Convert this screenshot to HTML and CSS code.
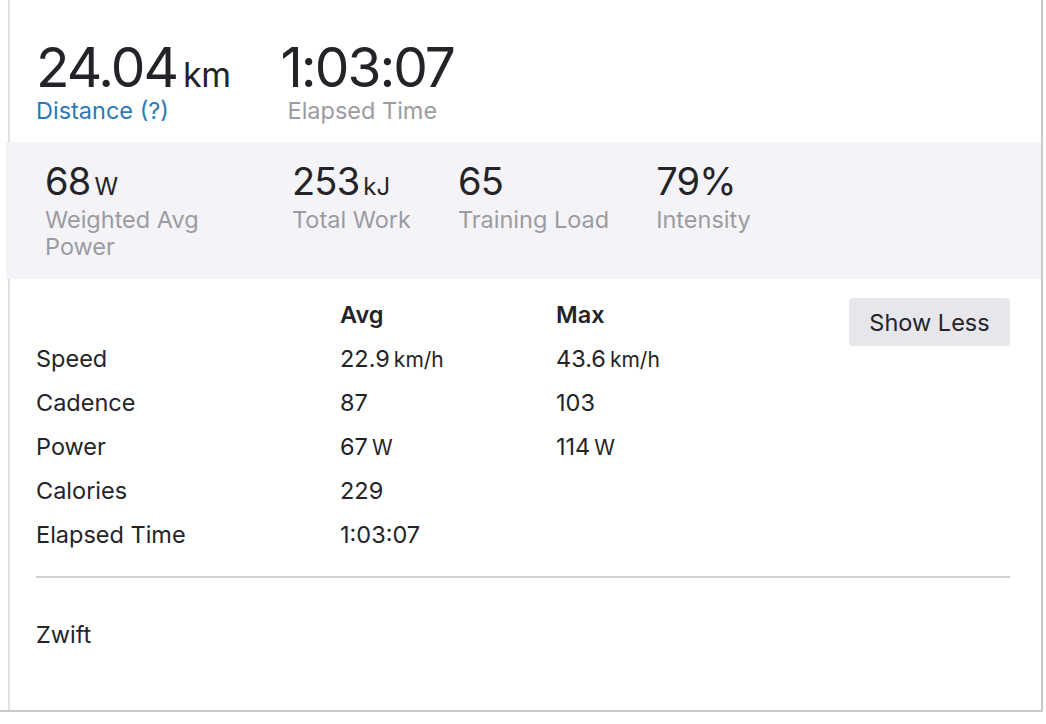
FILE: index.html
```html
<!DOCTYPE html>
<html lang="en">
<head>
<meta charset="utf-8">
<title>Activity stats</title>
<link rel="stylesheet" href="styles.css">
</head>
<body>
<div class="frame">
  <section class="card">
    <ul class="primary">
      <li class="stat">
        <div class="big-value">24.04<abbr class="big-unit">km</abbr></div>
        <div class="big-label link">Distance (?)</div>
      </li>
      <li class="stat">
        <div class="big-value">1:03:07</div>
        <div class="big-label">Elapsed Time</div>
      </li>
    </ul>

    <ul class="secondary">
      <li class="sec-stat first">
        <div class="sec-value">68<abbr class="sec-unit">W</abbr></div>
        <div class="sec-label">Weighted Avg Power</div>
      </li>
      <li class="sec-stat">
        <div class="sec-value">253<abbr class="sec-unit">kJ</abbr></div>
        <div class="sec-label">Total Work</div>
      </li>
      <li class="sec-stat">
        <div class="sec-value">65</div>
        <div class="sec-label">Training Load</div>
      </li>
      <li class="sec-stat">
        <div class="sec-value">79%</div>
        <div class="sec-label">Intensity</div>
      </li>
    </ul>

    <div class="details">
      <div class="table">
        <div class="cell"></div>
        <div class="cell head">Avg</div>
        <div class="cell head">Max</div>

        <div class="cell">Speed</div>
        <div class="cell">22.9<abbr class="unit">km/h</abbr></div>
        <div class="cell">43.6<abbr class="unit">km/h</abbr></div>

        <div class="cell">Cadence</div>
        <div class="cell">87</div>
        <div class="cell">103</div>

        <div class="cell">Power</div>
        <div class="cell">67<abbr class="unit">W</abbr></div>
        <div class="cell">114<abbr class="unit">W</abbr></div>

        <div class="cell">Calories</div>
        <div class="cell">229</div>
        <div class="cell"></div>

        <div class="cell">Elapsed Time</div>
        <div class="cell">1:03:07</div>
        <div class="cell"></div>
      </div>
      <button class="toggle" type="button">Show Less</button>
    </div>

    <div class="divider"></div>

    <div class="device">Zwift</div>
  </section>
</div>
</body>
</html>
```

FILE: styles.css
```css
html, body {
  margin: 0;
  padding: 0;
  background: #ffffff;
}

body {
  font-family: Inter, "Noto Sans", "Liberation Sans", sans-serif;
  color: #242428;
}

abbr {
  text-decoration: none;
}

ul {
  list-style: none;
  margin: 0;
  padding: 0;
}

.frame {
  width: 1041px;
  height: 710px;
  border-right: 2px solid #c9c9cd;
  border-bottom: 2px solid #c9c9cd;
}

.card {
  margin-left: 8px;
  height: 710px;
  border-left: 2px solid #e1e1e5;
  box-sizing: border-box;
}

/* Primary stats */
.primary {
  display: flex;
  gap: 50px;
  padding: 37px 0 0 26px;
  height: 108px;
  box-sizing: border-box;
}

.big-value {
  font-size: 55px;
  line-height: 60px;
  letter-spacing: -2px;
  font-weight: 400;
  white-space: nowrap;
}

.big-unit {
  font-size: 34px;
  line-height: 1;
  letter-spacing: -0.5px;
  margin-left: 6px;
}

.big-label {
  font-size: 23.5px;
  line-height: 28px;
  color: #9b9ba0;
  margin-left: 7px;
}

.big-label.link {
  color: #2c79b3;
  margin-left: 0;
}

/* Secondary band */
.secondary {
  display: flex;
  gap: 47px;
  margin-left: -4px;
  margin-top: 34px;
  padding: 17px 0 0 39px;
  height: 137px;
  box-sizing: border-box;
  background: #f4f4f8;
}

.sec-value {
  font-size: 38px;
  line-height: 44px;
  letter-spacing: -0.8px;
  white-space: nowrap;
}

.sec-unit {
  font-size: 24px;
  line-height: 1;
  letter-spacing: 0;
  margin-left: 4px;
}

.sec-label {
  font-size: 23.5px;
  line-height: 27px;
  margin-top: 3px;
  color: #9b9ba0;
}

.sec-stat.first {
  width: 200px;
}

/* Details table */
.details {
  display: flex;
  align-items: flex-start;
  padding: 14px 31px 0 26px;
}

.table {
  flex: 1;
  display: grid;
  grid-template-columns: 304px 216px 1fr;
  grid-auto-rows: 44px;
}

.cell {
  font-size: 23.5px;
  line-height: 44px;
  white-space: nowrap;
}

.cell.head {
  font-weight: 600;
}

.unit {
  font-size: 21px;
  line-height: 1;
  margin-left: 4px;
}

.toggle {
  margin-top: 5px;
  width: 161px;
  height: 48px;
  border: none;
  border-radius: 4px;
  background: #e6e6eb;
  color: #242428;
  font-family: inherit;
  font-size: 23.5px;
  padding: 0;
}

.divider {
  margin: 19px 31px 0 26px;
  height: 2px;
  background: #cfcfd3;
}

.device {
  padding: 35px 0 0 26px;
  font-size: 23.5px;
  line-height: 44px;
}
```
